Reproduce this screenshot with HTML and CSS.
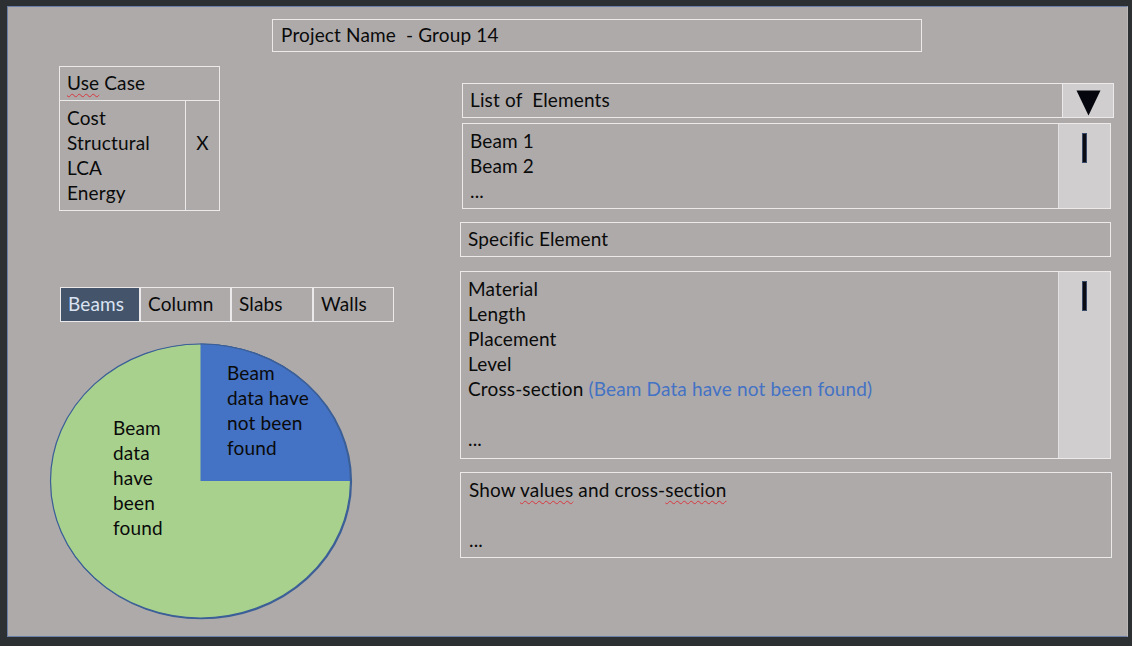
FILE: index.html
```html
<!DOCTYPE html>
<html>
<head>
<meta charset="utf-8">
<link rel="stylesheet" href="styles.css">
</head>
<body>
<div class="frame">
  <div class="project">Project Name&nbsp; - Group 14</div>
  <div class="main">
    <div class="left">
      <div class="usecase">
        <div class="uc-head"><span class="spell">Use</span> Case</div>
        <div class="uc-body">
          <div class="uc-list">
            <div>Cost</div>
            <div>Structural</div>
            <div>LCA</div>
            <div>Energy</div>
          </div>
          <div class="uc-mark">X</div>
        </div>
      </div>
      <div class="tabs">
        <div class="tab tab-active t1">Beams</div>
        <div class="tab t2">Column</div>
        <div class="tab t3">Slabs</div>
        <div class="tab t4">Walls</div>
      </div>
      <svg class="pie" width="304" height="278" viewBox="0 0 304 278">
        <ellipse cx="152.3" cy="139.5" rx="150" ry="137" fill="none" stroke="#3b5f97" stroke-width="1.6"/>
        <ellipse cx="151.5" cy="139" rx="150" ry="137" fill="#a9d18e" stroke="#3b5f97" stroke-width="1.2"/>
        <path d="M151.5 2 A150 137 0 0 1 301.5 139 L151.5 139 Z" fill="#4472c4"/>
        <path d="M151.5 2 A150 137 0 0 1 301.5 139" fill="none" stroke="#3b5f97" stroke-width="1.2"/>
        <text class="pie-text" x="178" y="38">
          <tspan x="178" dy="0">Beam</tspan>
          <tspan x="178" dy="25">data have</tspan>
          <tspan x="178" dy="25">not been</tspan>
          <tspan x="178" dy="25">found</tspan>
        </text>
        <text class="pie-text" x="64" y="93">
          <tspan x="64" dy="0">Beam</tspan>
          <tspan x="64" dy="25">data</tspan>
          <tspan x="64" dy="25">have</tspan>
          <tspan x="64" dy="25">been</tspan>
          <tspan x="64" dy="25">found</tspan>
        </text>
      </svg>
    </div>
    <div class="right">
      <div class="dropdown">
        <div class="dd-label">List of&nbsp; Elements</div>
        <div class="dd-button">
          <svg width="25" height="26" viewBox="0 0 25 26"><polygon points="0.5,0.5 24.5,0.5 12.5,25.5" fill="#05050d"/></svg>
        </div>
      </div>
      <div class="listbox lb1">
        <div class="lb-content">
          <div>Beam 1</div>
          <div>Beam 2</div>
          <div>...</div>
        </div>
        <div class="scroll"><div class="thumb"></div></div>
      </div>
      <div class="specific">Specific Element</div>
      <div class="listbox lb2">
        <div class="lb-content">
          <div>Material</div>
          <div>Length</div>
          <div>Placement</div>
          <div>Level</div>
          <div>Cross-section <span class="blue">(Beam Data have not been found)</span></div>
          <div>&nbsp;</div>
          <div>...</div>
        </div>
        <div class="scroll"><div class="thumb"></div></div>
      </div>
      <div class="showbox">
        <div>Show <span class="spell">values</span> and cross-<span class="spell">section</span></div>
        <div>&nbsp;</div>
        <div>...</div>
      </div>
    </div>
  </div>
</div>
</body>
</html>
```

FILE: styles.css
```css
* { box-sizing: border-box; }
html, body { margin: 0; padding: 0; }
body {
  background: #2c3032;
  width: 1132px;
  height: 646px;
  overflow: hidden;
  font-family: "Lato", "Liberation Sans", sans-serif;
  font-size: 19px;
  letter-spacing: 0.15px;
  color: #0a0a0a;
}
.frame {
  margin: 6px 0 0 7px;
  width: 1121px;
  height: 631px;
  background: #aeaaaa;
  border: 1px solid #6b7fa6;
  border-right-color: #bcb8b8;
}
.project {
  margin: 12px 0 0 264px;
  width: 650px;
  height: 33px;
  border: 1px solid #ebe9e9;
  padding: 0 8px;
  line-height: 30px;
}
.main {
  display: flex;
  margin-top: 14px;
  padding-left: 43px;
}
.left {
  width: 409px;
  display: flex;
  flex-direction: column;
}
.usecase {
  margin-left: 8px;
  width: 161px;
  height: 145px;
  border: 1px solid #ebe9e9;
  display: flex;
  flex-direction: column;
}
.uc-head {
  height: 34px;
  border-bottom: 1px solid #ebe9e9;
  padding-left: 7px;
  line-height: 32px;
}
.uc-body {
  flex: 1;
  display: flex;
}
.uc-list {
  width: 126px;
  border-right: 1px solid #ebe9e9;
  padding: 4px 0 0 7px;
  line-height: 25px;
}
.uc-mark {
  flex: 1;
  text-align: center;
  padding-top: 29px;
  line-height: 25px;
}
.spell {
  text-decoration: underline wavy #d9363e;
  text-decoration-thickness: 1px;
  text-underline-offset: 3px;
}
.tabs {
  display: flex;
  margin: 76px 0 0 9px;
  height: 35px;
  border: 1px solid #ebe9e9;
  width: 334px;
}
.tab {
  padding-left: 7px;
  line-height: 32px;
  border-right: 2px solid #ebe9e9;
}
.tab:last-child { border-right: none; flex: 1; }
.t1 { width: 80px; }
.t2 { width: 91px; }
.t3 { width: 82px; }
.tab-active {
  background: #44546a;
  color: #dae3f3;
}
.pie {
  display: block;
  margin: 20px 0 0 -2px;
}
.pie-text {
  font-family: "Lato", "Liberation Sans", sans-serif;
  font-size: 19px;
  letter-spacing: 0.15px;
  fill: #0a0a0a;
}
.right {
  width: 653px;
  display: flex;
  flex-direction: column;
  padding-top: 17px;
}
.dropdown {
  margin-left: 2px;
  width: 652px;
  height: 35px;
  border: 1px solid #ebe9e9;
  display: flex;
}
.dd-label {
  flex: 1;
  padding-left: 7px;
  line-height: 32px;
}
.dd-button {
  width: 51px;
  background: #d0cece;
  border-left: 1px solid #ebe9e9;
  display: flex;
  justify-content: center;
  padding-top: 6px;
}
.listbox {
  display: flex;
  border: 1px solid #ebe9e9;
}
.lb1 {
  margin: 5px 0 0 2px;
  width: 649px;
  height: 86px;
}
.lb2 {
  margin-top: 14px;
  width: 651px;
  height: 188px;
}
.lb-content {
  flex: 1;
  padding: 4px 0 0 7px;
  line-height: 25px;
}
.scroll {
  width: 52px;
  background: #d0cece;
  border-left: 1px solid #e2e0e0;
  display: flex;
  justify-content: center;
  padding-top: 9px;
}
.thumb {
  width: 5px;
  height: 30px;
  background: #0b0b14;
  border: 1px solid #3a4a66;
}
.specific {
  margin-top: 13px;
  width: 651px;
  height: 35px;
  border: 1px solid #ebe9e9;
  padding-left: 7px;
  line-height: 32px;
}
.blue { color: #4472c4; }
.showbox {
  margin-top: 13px;
  width: 652px;
  height: 86px;
  border: 1px solid #ebe9e9;
  padding: 4px 0 0 8px;
  line-height: 25px;
}
```
